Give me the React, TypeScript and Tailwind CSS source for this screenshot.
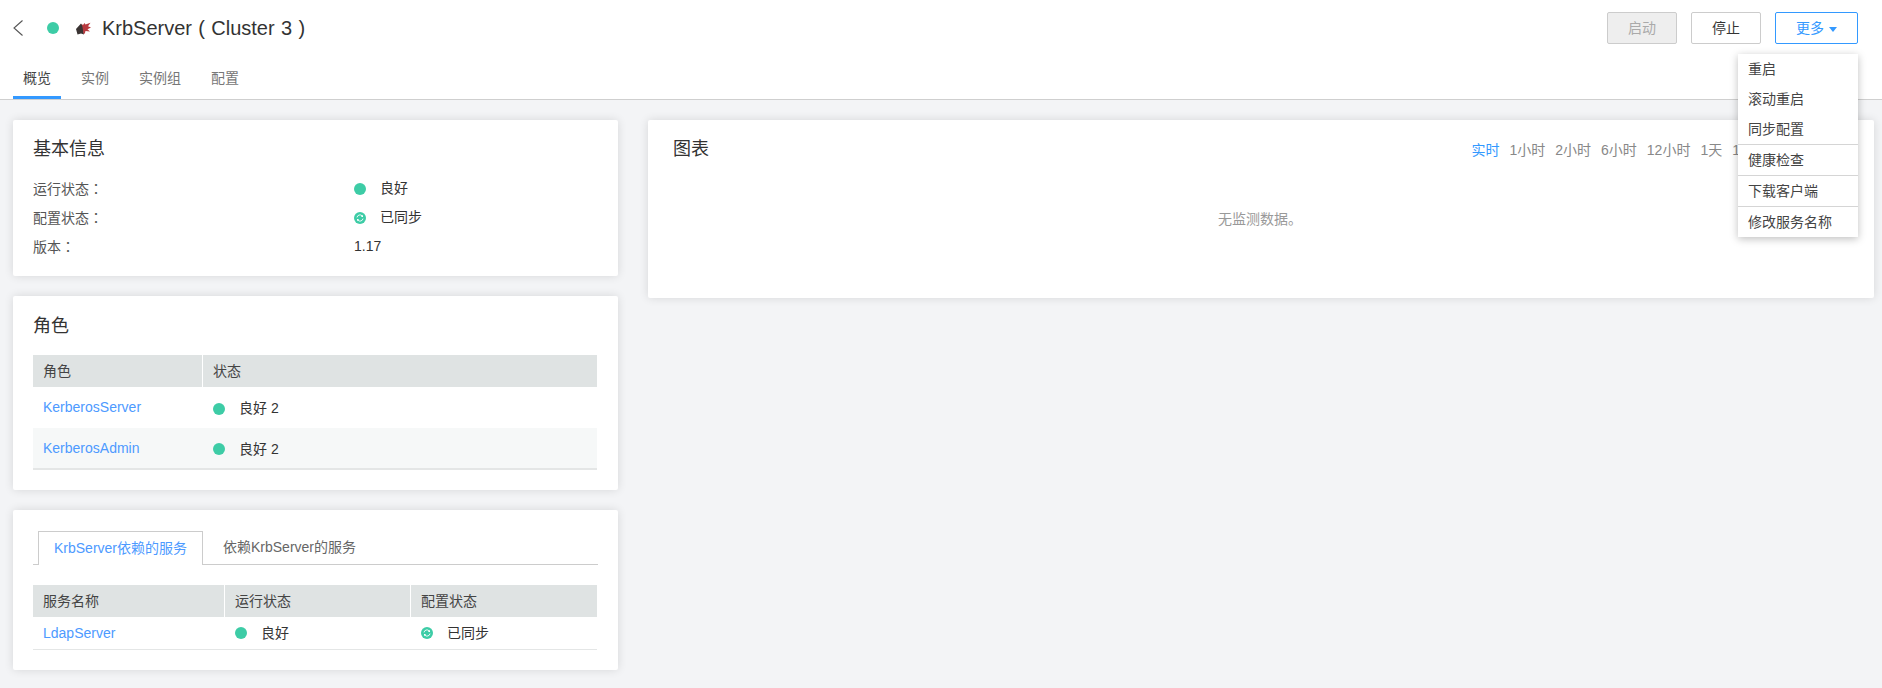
const font = { fontFamily: '"Liberation Sans", "Noto Sans CJK SC", sans-serif' };

const tabs = ["概览", "实例", "实例组", "配置"];
const ranges = ["实时", "1小时", "2小时", "6小时", "12小时", "1天", "1周"];
const menu = [
  ["重启", "滚动重启", "同步配置"],
  ["健康检查"],
  ["下载客户端"],
  ["修改服务名称"],
];

function Dot() {
  return <span className="inline-block h-3 w-3 shrink-0 rounded-full bg-[#3dcca6]" />;
}

function SyncDot() {
  return (
    <svg width="12" height="12" viewBox="0 0 12 12" className="shrink-0">
      <circle cx="6" cy="6" r="6" fill="#3dcca6" />
      <path d="M3 5.4A3 3 0 0 1 8.2 3.9" fill="none" stroke="#fff" strokeWidth="0.9" />
      <path d="M9 6.6A3 3 0 0 1 3.8 8.1" fill="none" stroke="#fff" strokeWidth="0.9" />
      <path d="M9 2.8v2.3H6.9z" fill="#fff" />
      <path d="M3 9.2V6.9h2.1z" fill="#fff" />
    </svg>
  );
}

function Status({ sync, text }: { sync?: boolean; text: string }) {
  return (
    <span className="flex items-center gap-[14px] text-[#333]">
      {sync ? <SyncDot /> : <Dot />}
      {text}
    </span>
  );
}

function Logo() {
  return (
    <svg width="15" height="13" viewBox="0 0 15 13" className="shrink-0">
      <path d="M0 7 5 1.5 7 4 8 12.5 5 11.5 1.5 12.5z" fill="#3a3433" />
      <path d="M5.5 2 7 3 8.5 1 9.5 2.5 14.5 0.8 12 4.2 15 5.5 11.5 7.2 14 9.5 9.5 9 8.8 11.5 7.5 12 6.5 5z" fill="#b83a3f" />
    </svg>
  );
}

function Card({ className, children }: { className: string; children: React.ReactNode }) {
  return (
    <section className={`rounded-[2px] bg-white shadow-[0_0_10px_rgba(0,0,0,0.12)] ${className}`}>
      {children}
    </section>
  );
}

function Heading({ text }: { text: string }) {
  return <h2 className="text-[18px] leading-[28px] text-[#333]">{text}</h2>;
}

function InfoRow({ label, children }: { label: string; children: React.ReactNode }) {
  return (
    <div className="flex h-[29px] items-center">
      <span className="w-[321px] text-[#555]">
        {label}
        <span className="font-['Noto_Sans_CJK_TC']">：</span>
      </span>
      {children}
    </div>
  );
}

function HeadCell({ text, className }: { text: string; className: string }) {
  return <div className={`flex items-center pl-[10px] text-[#444] ${className}`}>{text}</div>;
}

function Link({ text }: { text: string }) {
  return <a className="text-[#4d9aff]">{text}</a>;
}

export default function App() {
  return (
    <div className="relative h-[688px] w-full overflow-hidden bg-[#f3f4f6] text-[14px]" style={font}>
      {/* Header */}
      <header className="h-[100px] border-b border-[#cfcfcf] bg-white">
        <div className="flex h-[56px] items-center pl-[13px] pr-[24px]">
          <svg width="10" height="16" viewBox="0 0 10 16" className="mr-[24px] shrink-0">
            <path d="M9.5 0.5 1 8l8.5 7.5" fill="none" stroke="#555" strokeWidth="1.1" />
          </svg>
          <Dot />
          <span className="ml-[17px] mr-[11px] flex">
            <Logo />
          </span>
          <h1 className="text-[20px] text-[#333] [word-spacing:0.75px]">KrbServer ( Cluster 3 )</h1>
          <div className="ml-auto flex gap-[14px]">
            <button className="h-[32px] w-[70px] rounded-[2px] border border-[#cccccc] bg-[#eeeeee] text-[#aaa]">启动</button>
            <button className="h-[32px] w-[70px] rounded-[2px] border border-[#cccccc] bg-white text-[#333]">停止</button>
            <button className="flex h-[32px] w-[83px] items-center justify-center gap-[5px] rounded-[2px] border border-[#3399ff] bg-white text-[#3399ff]">
              更多
              <span className="mt-[2px] h-0 w-0 border-x-[4px] border-t-[5px] border-x-transparent border-t-[#3399ff]" />
            </button>
          </div>
        </div>
        <nav className="flex h-[43px] gap-[10px] pl-[13px]">
          {tabs.map((t, i) => (
            <a
              key={t}
              className={`flex h-[43px] items-center border-b-[3px] px-[10px] pt-[5px] ${
                i === 0 ? "border-[#3399ff] text-[#444]" : "border-transparent text-[#777]"
              }`}
            >
              {t}
            </a>
          ))}
        </nav>
      </header>

      {/* Content */}
      <main className="flex items-start gap-[30px] pl-[13px] pr-[8px] pt-[20px]">
        <div className="flex w-[605px] shrink-0 flex-col gap-[20px]">
          <Card className="h-[156px] px-5 pt-[15px]">
            <Heading text="基本信息" />
            <div className="mt-[11px]">
              <InfoRow label="运行状态">
                <Status text="良好" />
              </InfoRow>
              <InfoRow label="配置状态">
                <Status sync text="已同步" />
              </InfoRow>
              <InfoRow label="版本">
                <span className="text-[#333]">1.17</span>
              </InfoRow>
            </div>
          </Card>

          <Card className="px-5 pb-5 pt-[16px]">
            <Heading text="角色" />
            <div className="mt-[15px] w-[564px]">
              <div className="flex h-[32px] gap-px">
                <HeadCell text="角色" className="w-[169px] bg-[#dfe3e3]" />
                <HeadCell text="状态" className="flex-1 bg-[#dfe3e3]" />
              </div>
              <div className="flex h-[41px] items-center pt-[2px]">
                <div className="w-[170px] pb-[2px] pl-[10px]"><Link text="KerberosServer" /></div>
                <div className="pl-[10px]"><Status text="良好 2" /></div>
              </div>
              <div className="flex h-[42px] items-center border-b-2 border-[#e4e6e6] bg-[#f6f8f8] pt-[2px]">
                <div className="w-[170px] pb-[2px] pl-[10px]"><Link text="KerberosAdmin" /></div>
                <div className="pl-[10px]"><Status text="良好 2" /></div>
              </div>
            </div>
          </Card>

          <Card className="px-5 pb-5 pt-[21px]">
            <div className="flex h-[34px] w-[565px] border-b border-[#cccccc]">
              <a className="ml-[5px] flex h-[34px] w-[165px] items-center justify-center border-x border-t border-[#cccccc] bg-white text-[#4d9aff]">
                KrbServer依赖的服务
              </a>
              <a className="ml-[20px] flex h-[33px] items-center text-[#666]">依赖KrbServer的服务</a>
            </div>
            <div className="mt-[20px] w-[564px]">
              <div className="flex h-[32px] gap-px">
                <HeadCell text="服务名称" className="w-[191px] bg-[#dfe3e3]" />
                <HeadCell text="运行状态" className="w-[185px] bg-[#dfe3e3]" />
                <HeadCell text="配置状态" className="flex-1 bg-[#dfe3e3]" />
              </div>
              <div className="flex h-[33px] items-center border-b border-[#e4e6e6]">
                <div className="w-[192px] pl-[10px]"><Link text="LdapServer" /></div>
                <div className="w-[186px] pl-[10px]"><Status text="良好" /></div>
                <div className="pl-[10px]"><Status sync text="已同步" /></div>
              </div>
            </div>
          </Card>
        </div>

        <Card className="h-[178px] flex-1 pl-[25px] pr-[27px] pt-[15px]">
          <div className="flex items-start justify-between">
            <Heading text="图表" />
            <div className="mr-[93px] mt-[5px] flex gap-[10px] text-[#888]">
              {ranges.map((r, i) => (
                <a key={r} className={i === 0 ? "text-[#3399ff]" : ""}>{r}</a>
              ))}
            </div>
          </div>
          <p className="mt-[46px] text-center leading-[20px] text-[#999]">无监测数据。</p>
        </Card>
      </main>

      {/* Dropdown */}
      <div className="absolute left-[1738px] top-[54px] w-[120px] bg-white shadow-[0_2px_8px_rgba(0,0,0,0.25)]">
        {menu.map((group, g) => (
          <div key={g} className={g > 0 ? "border-t border-[#d5d5d5]" : ""}>
            {group.map((item) => (
              <div key={item} className="flex h-[30px] items-center pl-[10px] text-[#444]">{item}</div>
            ))}
          </div>
        ))}
      </div>
    </div>
  );
}
